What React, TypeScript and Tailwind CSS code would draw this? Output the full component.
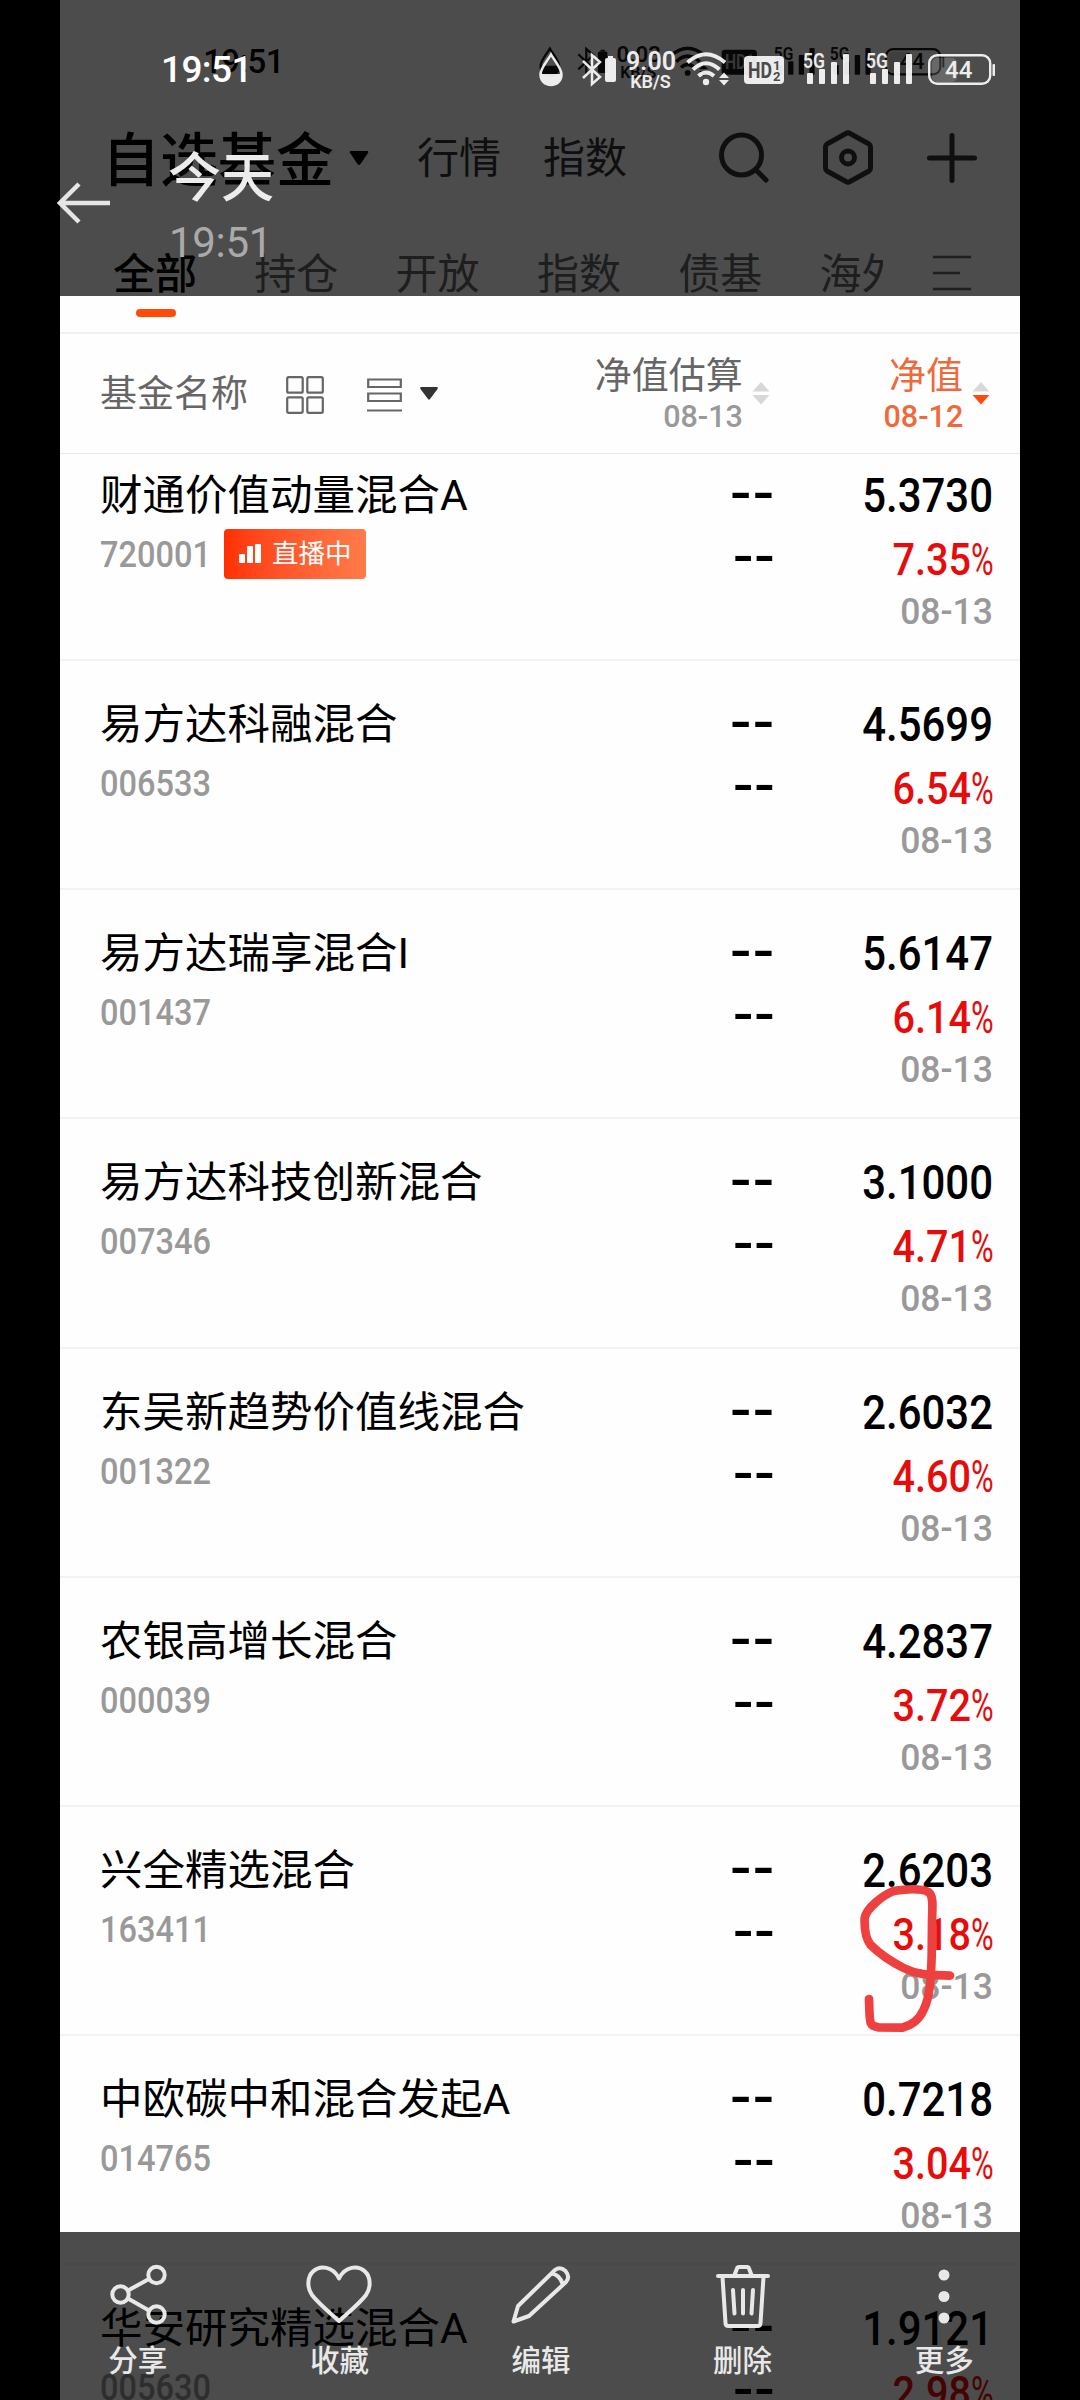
import { clsx } from "clsx";

type Fund = {
  name: string;
  code: string;
  value: string;
  rate: string;
  live?: boolean;
};

const funds: Fund[] = [
  { name: "财通价值动量混合A", code: "720001", value: "5.3730", rate: "7.35", live: true },
  { name: "易方达科融混合", code: "006533", value: "4.5699", rate: "6.54" },
  { name: "易方达瑞享混合I", code: "001437", value: "5.6147", rate: "6.14" },
  { name: "易方达科技创新混合", code: "007346", value: "3.1000", rate: "4.71" },
  { name: "东吴新趋势价值线混合", code: "001322", value: "2.6032", rate: "4.60" },
  { name: "农银高增长混合", code: "000039", value: "4.2837", rate: "3.72" },
  { name: "兴全精选混合", code: "163411", value: "2.6203", rate: "3.18" },
  { name: "中欧碳中和混合发起A", code: "014765", value: "0.7218", rate: "3.04" },
  { name: "华安研究精选混合A", code: "005630", value: "1.9121", rate: "2.98" },
];

const tabs = ["全部", "持仓", "开放", "指数", "债基"];

function Signal() {
  return (
    <svg className="mr-4 h-9 w-[47px] shrink-0" viewBox="0 0 47 36" fill="currentColor">
      <text x="1" y="16" fontSize="21" fontWeight="600" textLength="22" lengthAdjust="spacingAndGlyphs">5G</text>
      <rect x="5" y="21" width="6" height="11" rx="1" />
      <rect x="17" y="17" width="6" height="15" rx="1" />
      <rect x="29" y="10" width="6" height="22" rx="1" />
      <rect x="41" y="2" width="6" height="30" rx="1" />
    </svg>
  );
}

function StatusBar({ speed, cut }: { speed: string; cut: string }) {
  return (
    <div className="flex h-[100px] w-[1080px] items-start pt-[52px] pr-[85px] pl-[161px]">
      <div className="mt-[-1px] w-[110px] text-[37px] leading-[37px] font-medium tracking-[-0.6px]">19:51</div>
      <div className="ml-auto flex h-9 items-start opacity-90">
        <svg className="mr-[19px] h-9 w-6" viewBox="0 0 24 36" fill="none">
          <path d="M12 2.5C9 8 1.5 16 1.5 22.5C1.5 29 6 33 12 33S22.500 29 22.500 22.500C22.500 16 15 8 12 2.500Z" stroke="currentColor" strokeWidth="2.500" />
          <path d="M1.500 22H22.500C22.500 29 18 33 12 33S1.500 29 1.500 22Z" fill="currentColor" />
        </svg>
        <svg className="mr-[10px] h-9 w-[34px]" viewBox="0 0 34 36" fill="none">
          <path d="M1 9L18 25L10 32V3L18 10L1 26" stroke="currentColor" strokeWidth="2.500" />
          <rect x="23" y="6" width="11" height="24" rx="2" fill="currentColor" />
          <rect x="26" y="4" width="5" height="2" fill="currentColor" />
        </svg>
        <div className="mr-[11px] w-[49px] text-center font-semibold">
          <div className="text-[25px] leading-[20px]">{speed}</div>
          <div className="text-[18px] leading-[20px]">KB/S</div>
        </div>
        <svg className="mr-[15px] h-9 w-[43px]" viewBox="0 0 43 36" fill="none">
          <path d="M1.500 10.500Q20 -6 39 10.500M7 17.500Q20 5 33.500 17.500M12.500 24Q20 17 28 24" stroke="currentColor" strokeWidth="4" />
          <circle cx="20" cy="30" r="3.200" fill="currentColor" />
          <path d="M38 20.500L43 26H33ZM38 33.500L33 28H43Z" fill="currentColor" />
        </svg>
        <svg className={clsx("mr-[18px] h-9 w-10", cut)} viewBox="0 0 40 36">
          <rect className="fill-(--fg)" y="4" width="40" height="28" rx="4" />
          <text x="4" y="26" fontSize="22" fontWeight="700" fill="currentColor" textLength="24" lengthAdjust="spacingAndGlyphs">HD</text>
          <text x="29" y="17.500" fontSize="13" fontWeight="700" fill="currentColor">1</text>
          <text x="29" y="29" fontSize="13" fontWeight="700" fill="currentColor">2</text>
        </svg>
        <Signal />
        <Signal />
        <svg className="h-9 w-[67px]" viewBox="0 0 67 36" fill="none">
          <rect x="4" y="6" width="25" height="24" rx="5" fill="currentColor" opacity="0.18" />
          <rect x="1.200" y="3.200" width="61" height="28.500" rx="8" stroke="currentColor" strokeWidth="2.400" />
          <rect x="64.500" y="12" width="2.500" height="12" rx="1" fill="currentColor" />
          <text x="17" y="26" fontSize="24" fontWeight="500" fill="currentColor">44</text>
        </svg>
      </div>
    </div>
  );
}

function TitleBar() {
  return (
    <div className="flex h-[131px] shrink-0 items-center pr-[40px] pl-[42px] text-[#333]">
      <h1 className="mt-[6px] w-[233px] text-[58px] leading-[60px] font-medium whitespace-nowrap text-black">自选基金</h1>
      <svg className="ml-[14px] h-4 w-5" viewBox="0 0 20 16">
        <path d="M2 1H18Q20 1 19 3L11.500 14Q10 16 8.500 14L1 3Q0 1 2 1Z" fill="#000" />
      </svg>
      <span className="mt-[3px] ml-[48px] w-[84px] text-[42px] leading-[60px]">行情</span>
      <span className="mt-[3px] ml-[42px] w-[84px] text-[42px] leading-[60px]">指数</span>
      <div className="ml-auto flex items-center gap-[48px]">
        <svg className="h-14 w-14" viewBox="0 0 56 56" fill="none" stroke="currentColor" strokeWidth="5" strokeLinecap="round">
          <circle cx="25.500" cy="25" r="20" />
          <path d="M40 40L50 50" />
        </svg>
        <svg className="h-14 w-14" viewBox="0 0 56 56" fill="none" stroke="currentColor" strokeWidth="5" strokeLinejoin="round">
          <path d="M26 3.500Q28 2 30 3.500L49 14Q50.500 15 50.500 17V38Q50.500 40 49 41L30 51.500Q28 53 26 51.500L7 41Q5.500 40 5.500 38V17Q5.500 15 7 14Z" />
          <circle cx="28" cy="27.500" r="6.500" />
        </svg>
        <svg className="h-14 w-14" viewBox="0 0 56 56" fill="none" stroke="currentColor" strokeWidth="5" strokeLinecap="round">
          <path d="M28 5.500V50.500M5.500 28H50.500" />
        </svg>
      </div>
    </div>
  );
}

function TabBar() {
  return (
    <div className="flex h-[111px] shrink-0 items-start border-b-2 border-[#f1f1f1] pl-[53px] text-[42px] leading-[60px] text-[#666]">
      {tabs.map((tab, i) => (
        <div key={tab} className={clsx("mr-[57.300px] w-[84px] pt-[22px]", i === 0 && "font-medium text-black")}>
          {tab}
          {i === 0 && <div className="mt-[4px] ml-[23px] h-2 w-10 rounded-full bg-[#ff4a0a]" />}
        </div>
      ))}
      <div className="w-[64px] overflow-hidden pt-[22px] whitespace-nowrap">海外</div>
      <svg className="mt-[32px] ml-[50px] h-9 w-[38px]" viewBox="0 0 38 36" stroke="#666" strokeWidth="2.500">
        <path d="M0 2H38M0 18H27M0 34H38" />
      </svg>
    </div>
  );
}

function SortArrows({ active }: { active?: boolean }) {
  return (
    <svg className="mt-[-1px] ml-[9px] h-6 w-[18px]" viewBox="0 0 18 24">
      <path d="M9 1L17.500 10.500H0.500Z" fill="#d8d8d8" />
      <path d="M9 23.500L0.500 14H17.500Z" fill={active ? "#ff4a0a" : "#d8d8d8"} />
    </svg>
  );
}

function ListHeader() {
  return (
    <div className="flex h-[120px] shrink-0 items-center border-b border-[#e8e8e8] pr-[30px] pl-[40px] text-[37px] text-[#666]">
      <span className="mt-[3px] leading-[50px]">基金名称</span>
      <svg className="mt-[2px] ml-[38px] h-[38px] w-[38px]" viewBox="0 0 38 38" fill="none" stroke="currentColor" strokeWidth="2.200">
        <rect x="1.200" y="1.200" width="15.500" height="15.500" rx="1.500" />
        <rect x="21.300" y="1.200" width="15.500" height="15.500" rx="1.500" />
        <rect x="1.200" y="21.300" width="15.500" height="15.500" rx="1.500" />
        <rect x="21.300" y="21.300" width="15.500" height="15.500" rx="1.500" />
      </svg>
      <svg className="mt-[3px] ml-[43px] h-[34px] w-[35px]" viewBox="0 0 35 34" fill="none" stroke="currentColor" strokeWidth="2.200">
        <path d="M1.200 1.500H33.800V9H1.200ZM1.200 15.500H33.800V23H1.200ZM0 32.500H35" />
      </svg>
      <svg className="ml-[18px] h-[13px] w-[18px]" viewBox="0 0 18 13">
        <path d="M1 0H17Q18.500 0.500 17.500 2L10 12Q9 13.500 8 12L0.500 2Q-0.500 0.500 1 0Z" fill="#333" />
      </svg>
      <div className="ml-auto flex items-center">
        <div className="mt-[2px] text-right">
          <div className="leading-[44px]">净值估算</div>
          <div className="origin-right scale-x-[0.970] text-[31.500px] leading-[36px] font-medium text-[#999]">08-13</div>
        </div>
        <SortArrows />
      </div>
      <div className="ml-[111px] flex items-center text-[#ee6a3c]">
        <div className="mt-[2px] text-right">
          <div className="leading-[44px]">净值</div>
          <div className="origin-right scale-x-[0.970] text-[31.500px] leading-[36px] font-medium">08-12</div>
        </div>
        <SortArrows active />
      </div>
    </div>
  );
}

function LiveBadge() {
  return (
    <div className="mt-[-3px] flex h-[50px] w-[142px] items-center rounded bg-linear-to-r from-[#ff2f00] to-[#ff7b49] pl-[15px] text-[26.500px] leading-[50px] text-white">
      <svg className="mr-[11px] h-[19px] w-[22px]" viewBox="0 0 22 19" fill="currentColor">
        <rect y="10" width="6" height="9" rx="1" />
        <rect x="8" y="2" width="6" height="17" rx="1" />
        <rect x="16" width="6" height="19" rx="1" />
      </svg>
      直播中
    </div>
  );
}

function FundRow({ fund }: { fund: Fund }) {
  return (
    <div className="flex h-[229.15px] shrink-0 justify-between border-b-2 border-[#f3f3f3] pr-[27px] pl-[40px]">
      <div className="w-[480px] pt-[34px] whitespace-nowrap">
        <div className="text-[42.500px] leading-[60px] text-black">{fund.name}</div>
        <div className="flex h-[58px] items-center">
          <span className="w-[124px]">
            <span className="inline-block origin-left scale-x-[0.880] text-[37px] leading-[50px] font-medium text-[#999]">{fund.code}</span>
          </span>
          {fund.live && <LiveBadge />}
        </div>
      </div>
      <div className="ml-auto pt-[26px] text-right font-['Liberation_Sans'] text-[67px] leading-[64px] text-black">
        <div className="tracking-[0.500px]">--</div>
        <div className="text-[64px]">--</div>
      </div>
      <div className="w-[218px] pt-[32px] text-right">
        <div className="origin-right scale-x-[0.855] text-[49px] leading-[64px] font-medium text-black">{fund.value}</div>
        <div className="origin-right scale-x-[0.880] text-[45px] leading-[64px] font-medium text-[#e60c0c]">
          {fund.rate}
          <span className="inline-block w-[25px] origin-left scale-x-[0.780] font-normal">%</span>
        </div>
        <div className="origin-right scale-x-[0.960] text-[37px] leading-[40px] font-medium text-[#999]">08-13</div>
      </div>
    </div>
  );
}

/* Hand-drawn mark over one of the rates */
function Scribble() {
  return (
    <svg className="absolute top-[1883px] left-[857px] h-[150px] w-[100px]" viewBox="470 160 300 450" fill="none" stroke="#ef4040" strokeWidth="26" strokeLinecap="round" strokeLinejoin="round">
      <path d="M749 438C700 436 655 438 610 415C570 395 530 365 510 345C495 325 492 290 493 265C498 235 550 195 580 184C620 178 665 176 685 188C702 200 695 240 695 280L694 380C692 440 690 500 670 540C655 575 630 588 605 594L535 593C504 590 509 580 506 508" />
    </svg>
  );
}

const actions = [
  {
    label: "分享",
    icon: (
      <>
        <circle cx="18.500" cy="32.500" r="8.200" />
        <circle cx="54.500" cy="13" r="8.200" />
        <circle cx="54.500" cy="52.500" r="8.200" />
        <path d="M26 28.500L47 17M26 36.500L47 48.500" />
      </>
    ),
  },
  {
    label: "收藏",
    icon: <path d="M36 16.500C30 4 17 3 10 9.500C4 15 4 26 9 33C15 41 26 50 36 59C46 50 57 41 63 33C68 26 68 15 62 9.500C55 3 42 4 36 16.500Z" />,
  },
  {
    label: "编辑",
    icon: (
      <path d="M8.500 59.500L13 44L50 8Q55 4 60.500 9Q65.500 15 61 20L24 54ZM47 11.500Q55 13 57.500 22" />
    ),
  },
  {
    label: "删除",
    icon: (
      <path d="M11 14H61M27.500 13L30 6.500Q30.500 5 32 5H40Q41.500 5 42 6.500L44.500 13M15.500 15L18.500 61Q18.500 64 21.500 64H50.500Q53.500 64 53.500 61L56.500 15M26 28L27.500 51.500M36 28V51.500M46 28L44.500 51.500" />
    ),
  },
  {
    label: "更多",
    icon: (
      <g fill="currentColor" stroke="none">
        <circle cx="36" cy="13" r="5.500" />
        <circle cx="36" cy="34.500" r="5.500" />
        <circle cx="36" cy="56" r="5.500" />
      </g>
    ),
  },
];

export default function App() {
  return (
    <div className="relative h-[2400px] w-[1080px] overflow-hidden bg-black font-[Roboto,'Noto_Sans_CJK_SC',sans-serif]">
      {/* photo being viewed */}
      <div className="ml-[60px] flex h-[2400px] w-[960px] flex-col overflow-hidden bg-[#fefefe]">
        <div className="h-[92px] shrink-0 text-black [--fg:#000]">
          <div className="w-[1080px] origin-top-left scale-[0.889]">
            <StatusBar speed="0.03" cut="text-[#aaa]" />
          </div>
        </div>
        <TitleBar />
        <TabBar />
        <ListHeader />
        <div className="min-h-0 flex-1 overflow-hidden">
          <div className="mt-[-22px] flex flex-col">
            {funds.map((fund) => (
              <FundRow key={fund.code} fund={fund} />
            ))}
          </div>
        </div>
      </div>
      <Scribble />

      {/* gallery chrome */}
      <div className="absolute top-0 left-0 h-[296px] w-full bg-black/70 text-white [--fg:#fff]">
        <StatusBar speed="9.00" cut="text-[#4c4c4c]" />
        <div className="flex items-start pl-[57px]">
          <svg className="mt-[81px] h-[44px] w-[54px] text-[#e6e6e6]" viewBox="0 0 54 44" fill="none" stroke="currentColor" strokeWidth="4.500">
            <path d="M53 22H3M22 3L3 22L22 41" />
          </svg>
          <div className="ml-[57px]">
            <div className="mt-[49px] text-[53px] leading-[60px] font-medium text-[#ececec]">今天</div>
            <div className="mt-[10px] ml-[1px] text-[42px] leading-[48px] tracking-[-0.300px] text-[#aaa]">19:51</div>
          </div>
        </div>
      </div>
      <div className="absolute bottom-0 left-0 flex h-[168px] w-full bg-black/70 pt-[30px] pr-[35px] pl-[37px] text-[#e8e8e8]">
        {actions.map((action) => (
          <div key={action.label} className="flex flex-1 flex-col items-center">
            <svg className="h-[72px] w-[72px]" viewBox="0 0 72 72" fill="none" stroke="currentColor" strokeWidth="4" strokeLinecap="round" strokeLinejoin="round">
              {action.icon}
            </svg>
            <span className="mt-[7px] text-[29.500px] leading-[40px] font-medium">{action.label}</span>
          </div>
        ))}
      </div>
    </div>
  );
}
